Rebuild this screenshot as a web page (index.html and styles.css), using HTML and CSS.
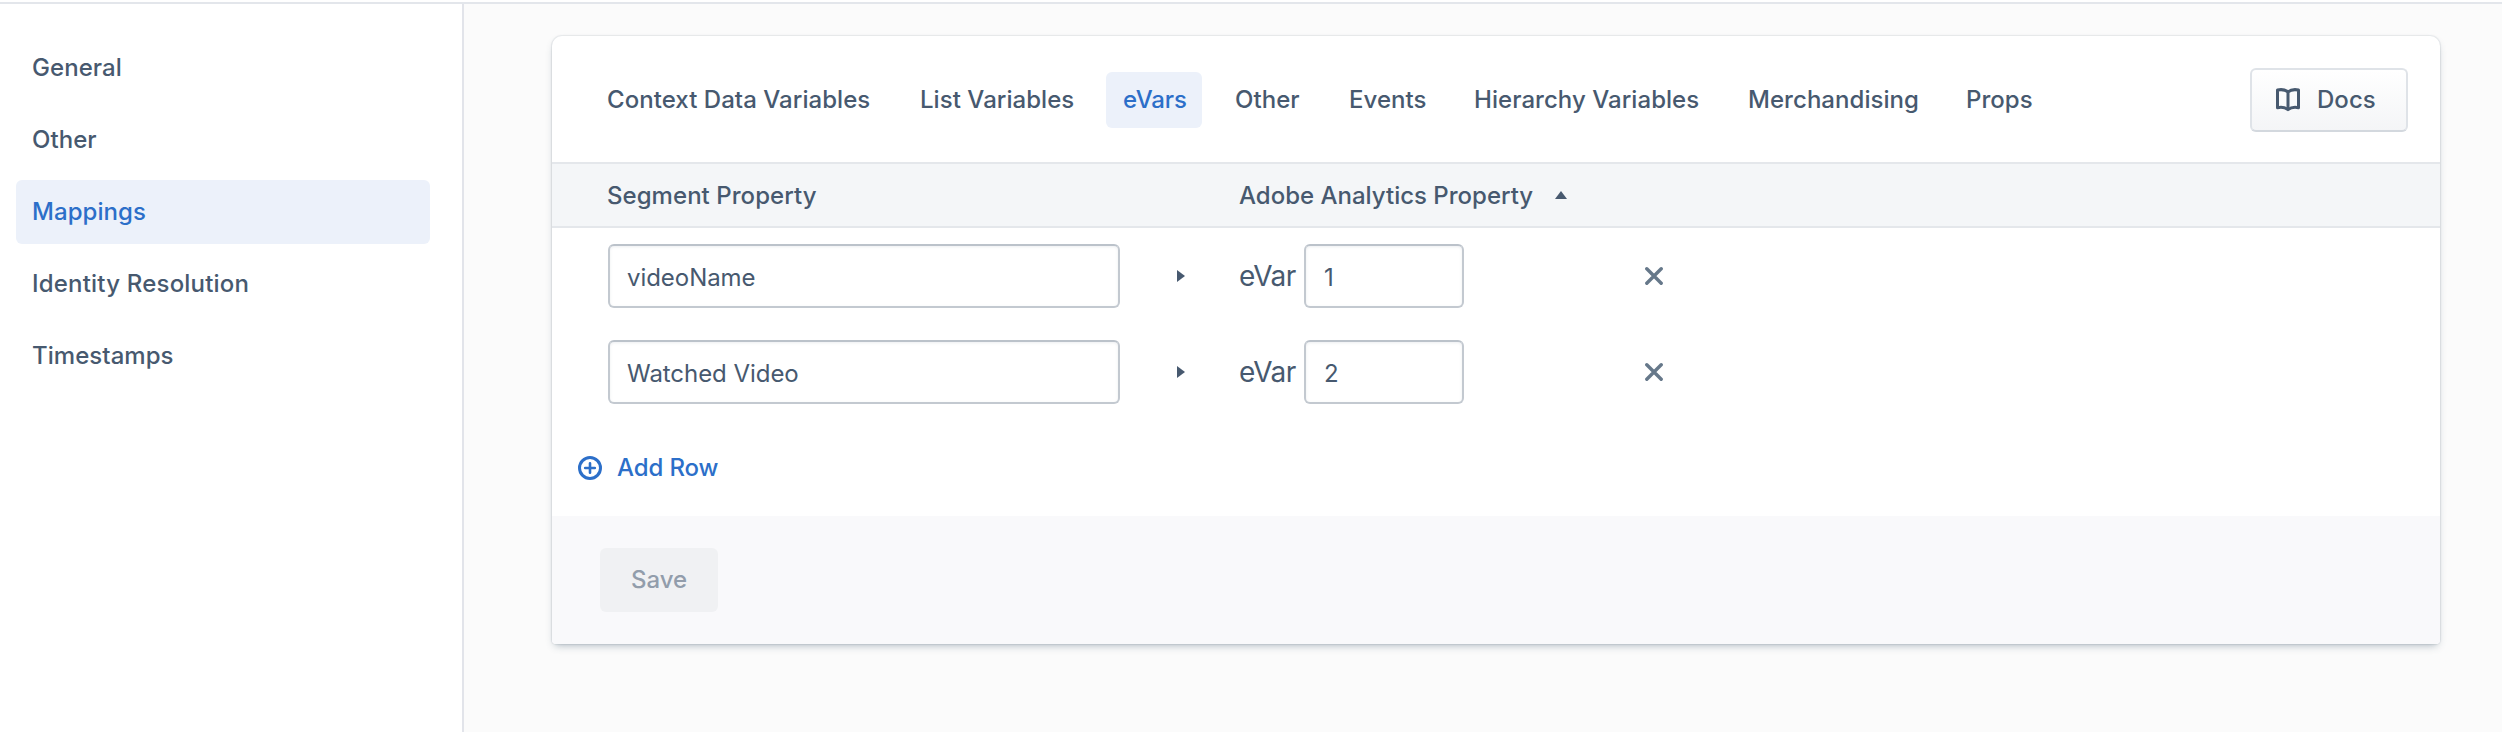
FILE: index.html
```html
<!DOCTYPE html>
<html lang="en">
<head>
<meta charset="utf-8">
<title>Mappings</title>
<link rel="stylesheet" href="styles.css">
</head>
<body>
<div class="app">
  <nav class="sidebar">
    <a class="nav-item">General</a>
    <a class="nav-item">Other</a>
    <a class="nav-item active">Mappings</a>
    <a class="nav-item nav-wide">Identity Resolution</a>
    <a class="nav-item">Timestamps</a>
  </nav>
  <main class="main">
    <section class="card">
      <header class="card-header">
        <div class="tabs">
          <a class="tab tab-context">Context Data Variables</a>
          <a class="tab tab-list">List Variables</a>
          <a class="tab tab-evars active">eVars</a>
          <a class="tab tab-other">Other</a>
          <a class="tab tab-events">Events</a>
          <a class="tab tab-hierarchy">Hierarchy Variables</a>
          <a class="tab tab-merch">Merchandising</a>
          <a class="tab tab-props">Props</a>
        </div>
        <button class="docs">
          <svg class="docs-icon" width="24" height="24" viewBox="0 0 24 24" fill="none" stroke="currentColor" stroke-width="3" stroke-linejoin="round"><path d="M12 3.9C9 1.500 5 1.300 1.500 2V19.700C5 19 9 19.300 12 21.700C15 19.300 19 19 22.500 19.700V2C19 1.300 15 1.500 12 3.900Z"/><path d="M12 4V21"/></svg>
          <span>Docs</span>
        </button>
      </header>
      <div class="grid thead">
        <span>Segment Property</span>
        <span></span>
        <span class="sortable">Adobe Analytics Property<svg width="12" height="8" viewBox="0 0 12 8"><path d="M6 0L12 8H0Z" fill="currentColor"/></svg></span>
      </div>
      <div class="grid row">
        <input class="input" value="videoName">
        <svg class="arrow" width="8" height="12" viewBox="0 0 8 12"><path d="M0 0L8 6L0 12Z" fill="currentColor"/></svg>
        <div class="target"><span class="prefix">eVar</span><input class="input" value="1"></div>
        <svg class="remove" width="18" height="18" viewBox="0 0 18 18"><path d="M1.800 1.800L16.200 16.200M16.200 1.800L1.800 16.200" stroke="currentColor" stroke-width="3.400" stroke-linecap="round"/></svg>
      </div>
      <div class="grid row">
        <input class="input" value="Watched Video">
        <svg class="arrow" width="8" height="12" viewBox="0 0 8 12"><path d="M0 0L8 6L0 12Z" fill="currentColor"/></svg>
        <div class="target"><span class="prefix">eVar</span><input class="input" value="2"></div>
        <svg class="remove" width="18" height="18" viewBox="0 0 18 18"><path d="M1.800 1.800L16.200 16.200M16.200 1.800L1.800 16.200" stroke="currentColor" stroke-width="3.400" stroke-linecap="round"/></svg>
      </div>
      <div class="add-row">
        <svg width="24" height="24" viewBox="0 0 24 24" fill="none" stroke="currentColor" stroke-width="3"><circle cx="12" cy="12" r="10.500"/><path d="M12 7.200V16.800M7.200 12H16.800" stroke-linecap="round" stroke-width="2.600"/></svg>
        <span>Add Row</span>
      </div>
      <footer class="card-footer"><button class="save" disabled>Save</button></footer>
    </section>
  </main>
</div>
</body>
</html>
```
FILE: styles.css
```css
* { box-sizing: border-box; }
body {
  margin: 0;
  height: 732px;
  overflow: hidden;
  padding-top: 2px;
  background: #fff;
  color: #47596f;
  font: 500 24px/32px Inter, "Liberation Sans", sans-serif;
  letter-spacing: 0.05px;
}
.app { display: flex; height: 730px; border-top: 2px solid #e3e6eb; }
.sidebar {
  display: flex;
  flex-direction: column;
  gap: 8px;
  width: 464px;
  flex: none;
  padding: 32px 32px 0 16px;
  border-right: 2px solid #e2e4ea;
}
.nav-item {
  display: flex;
  align-items: center;
  height: 64px;
  padding: 0 16px;
  border-radius: 6px;
}
.nav-wide { letter-spacing: 0.2px; }
.active { background: #ecf1fa; color: #2c6fc9; }
.main { flex: 1; background: #fbfbfb; padding: 32px 62px 0 88px; }
.card {
  height: 608px;
  background: #fff;
  border-radius: 10px 10px 4px 4px;
  overflow: hidden;
  box-shadow: 0 0 1px 1px rgba(67, 90, 111, 0.1), 0 4px 8px -3px rgba(67, 90, 111, 0.45);
}
.card-header {
  display: flex;
  align-items: center;
  justify-content: space-between;
  height: 128px;
  padding: 0 32px 0 39px;
  border-bottom: 2px solid #e4e7eb;
}
.card-header > * { margin-top: 2px; }
.tabs { display: flex; gap: 16px; }
.tab {
  height: 56px;
  padding: 12px 0 0 16px;
  border-radius: 6px;
  white-space: nowrap;
}
.tab-context { width: 297px; }
.tab-list { width: 186px; }
.tab-evars { width: 96px; padding-left: 17px; letter-spacing: -0.1px; }
.tab-other { width: 98px; padding-left: 17px; }
.tab-events { width: 110px; padding-left: 17px; }
.tab-hierarchy { width: 258px; }
.tab-merch { width: 202px; }
.tab-props { width: 100px; }
.docs {
  display: flex;
  align-items: center;
  gap: 17px;
  width: 158px;
  height: 64px;
  padding: 0 0 0 24px;
  border: 2px solid #dfe3e8;
  border-bottom-color: #d3d8de;
  border-radius: 6px;
  background: linear-gradient(#fff, #f4f5f7);
  color: inherit;
  font: inherit;
  letter-spacing: inherit;
}
.grid {
  display: grid;
  grid-template-columns: 512px 120px 405px 1fr;
  align-items: center;
  padding-left: 56px;
}
.thead {
  height: 64px;
  padding: 2px 0 0 55px;
  background: #f4f6f8;
  border-bottom: 2px solid #e4e7eb;
}
.sortable { display: flex; align-items: center; gap: 22px; white-space: nowrap; letter-spacing: 0; }
.sortable svg { margin-top: -2px; }
.row { height: 96px; }
.input {
  width: 100%;
  height: 64px;
  padding: 2px 17px 0;
  border: 2px solid #c3c9d0;
  border-top-color: #bbc2ca;
  border-radius: 6px;
  background: #fff;
  box-shadow: inset 0 1px 3px rgba(67, 90, 111, 0.1);
  color: inherit;
  font: inherit;
  font-weight: 400;
  letter-spacing: -0.05px;
  outline: 0;
}
.arrow { margin-left: 57px; }
.target { display: flex; align-items: center; }
.prefix { width: 65px; margin-left: -1px; font-size: 28px; font-weight: 400; letter-spacing: -0.6px; }
.target .input { width: 160px; padding-left: 18px; }
.remove { color: #66788a; }
.add-row {
  display: flex;
  align-items: center;
  gap: 15px;
  height: 96px;
  padding-left: 26px;
  color: #2c6fc9;
  letter-spacing: -0.1px;
}
.card-footer { height: 128px; padding: 32px 48px; background: #f9f9fb; }
.save {
  width: 118px;
  height: 64px;
  padding: 0;
  border: 0;
  border-radius: 6px;
  background: #f0f1f3;
  color: #929dab;
  font: inherit;
  letter-spacing: -0.1px;
}
```
